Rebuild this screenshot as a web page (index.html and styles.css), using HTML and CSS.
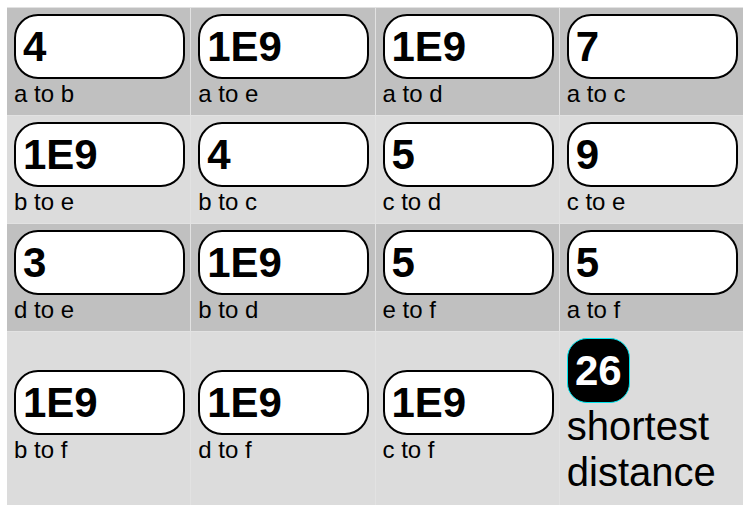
FILE: index.html
```html
<!DOCTYPE html>
<html>
<head>
<meta charset="utf-8">
<link rel="stylesheet" href="styles.css">
</head>
<body>
<div class="board">
  <div class="cell dark"><div class="pill">4</div><div class="label">a to b</div></div>
  <div class="cell dark"><div class="pill">1E9</div><div class="label">a to e</div></div>
  <div class="cell dark"><div class="pill">1E9</div><div class="label">a to d</div></div>
  <div class="cell dark"><div class="pill">7</div><div class="label">a to c</div></div>

  <div class="cell"><div class="pill">1E9</div><div class="label">b to e</div></div>
  <div class="cell"><div class="pill">4</div><div class="label">b to c</div></div>
  <div class="cell"><div class="pill">5</div><div class="label">c to d</div></div>
  <div class="cell"><div class="pill">9</div><div class="label">c to e</div></div>

  <div class="cell dark"><div class="pill">3</div><div class="label">d to e</div></div>
  <div class="cell dark"><div class="pill">1E9</div><div class="label">b to d</div></div>
  <div class="cell dark"><div class="pill">5</div><div class="label">e to f</div></div>
  <div class="cell dark"><div class="pill">5</div><div class="label">a to f</div></div>

  <div class="cell mid"><div class="pill">1E9</div><div class="label">b to f</div></div>
  <div class="cell mid"><div class="pill">1E9</div><div class="label">d to f</div></div>
  <div class="cell mid"><div class="pill">1E9</div><div class="label">c to f</div></div>
  <div class="cell result">
    <div class="badge">26</div>
    <div class="big">shortest<br>distance</div>
  </div>
</div>
</body>
</html>
```

FILE: styles.css
```css
html, body {
  margin: 0;
  padding: 0;
  background: #ffffff;
}
body {
  font-family: "Liberation Sans", Arial, sans-serif;
  color: #000;
}
.board {
  margin: 7px 0 0 7px;
  width: 736px;
  padding-top: 1px;
  background: #e2e2e2;
  display: grid;
  grid-template-columns: repeat(4, minmax(0, 1fr));
  grid-template-rows: 107px 107px 107px 173px;
  gap: 1px;
}
.cell {
  min-width: 0;
  background: #dcdcdc;
  padding: 6px 6px 6px 7px;
  display: flex;
  flex-direction: column;
  justify-content: flex-start;
}
.cell.dark {
  background: #c0c0c0;
}
.cell.mid {
  justify-content: center;
  padding-top: 0;
  padding-bottom: 2px;
}
.pill {
  box-sizing: border-box;
  height: 65px;
  width: 171px;
  border: 2px solid #000;
  border-radius: 24px;
  background: #fff;
  font-weight: bold;
  font-size: 42px;
  line-height: 48px;
  padding: 0 7px;
  display: flex;
  align-items: center;
}
.label {
  font-size: 24px;
  line-height: 30px;
}
.result {
  justify-content: flex-start;
}
.badge {
  box-sizing: border-box;
  width: 63px;
  height: 65px;
  background: #000;
  color: #fff;
  border: 1.5px solid #00e5ee;
  border-radius: 20px;
  font-weight: bold;
  font-size: 42px;
  display: flex;
  align-items: center;
  justify-content: center;
}
.big {
  font-size: 40px;
  line-height: 46px;
}
```
